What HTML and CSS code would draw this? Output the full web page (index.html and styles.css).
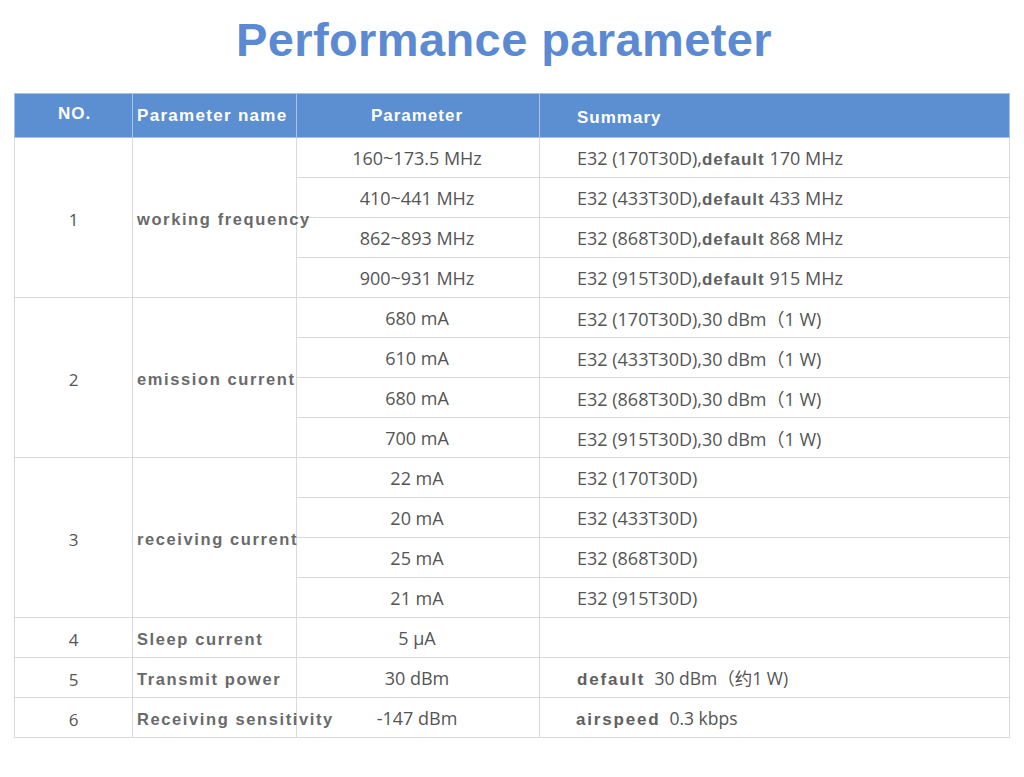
FILE: index.html
```html
<!DOCTYPE html>
<html>
<head>
<meta charset="utf-8">
<link rel="stylesheet" href="styles.css">
</head>
<body>
<div class="page">
  <div class="title-wrap"><h1 class="title">Performance parameter</h1></div>
  <table class="params">
    <colgroup>
      <col class="c-no"><col class="c-name"><col class="c-param"><col class="c-sum">
    </colgroup>
    <thead>
      <tr>
        <th class="h-no">NO.</th>
        <th class="h-name">Parameter name</th>
        <th class="h-param">Parameter</th>
        <th class="h-sum">Summary</th>
      </tr>
    </thead>
    <tbody>
      <tr><td class="no" rowspan="4">1</td><td class="name" rowspan="4">working frequency</td><td class="param">160~173.5 MHz</td><td class="sum">E32 (170T30D),<span class="em">default</span> 170 MHz</td></tr>
      <tr><td class="param">410~441 MHz</td><td class="sum">E32 (433T30D),<span class="em">default</span> 433 MHz</td></tr>
      <tr><td class="param">862~893 MHz</td><td class="sum">E32 (868T30D),<span class="em">default</span> 868 MHz</td></tr>
      <tr><td class="param">900~931 MHz</td><td class="sum">E32 (915T30D),<span class="em">default</span> 915 MHz</td></tr>

      <tr><td class="no" rowspan="4">2</td><td class="name" rowspan="4">emission current</td><td class="param">680 mA</td><td class="sum">E32 (170T30D),30 dBm（1 W)</td></tr>
      <tr><td class="param">610 mA</td><td class="sum">E32 (433T30D),30 dBm（1 W)</td></tr>
      <tr><td class="param">680 mA</td><td class="sum">E32 (868T30D),30 dBm（1 W)</td></tr>
      <tr><td class="param">700 mA</td><td class="sum">E32 (915T30D),30 dBm（1 W)</td></tr>

      <tr><td class="no" rowspan="4">3</td><td class="name" rowspan="4">receiving current</td><td class="param">22 mA</td><td class="sum">E32 (170T30D)</td></tr>
      <tr><td class="param">20 mA</td><td class="sum">E32 (433T30D)</td></tr>
      <tr><td class="param">25 mA</td><td class="sum">E32 (868T30D)</td></tr>
      <tr><td class="param">21 mA</td><td class="sum">E32 (915T30D)</td></tr>

      <tr><td class="no">4</td><td class="name">Sleep current</td><td class="param">5 μA</td><td class="sum"></td></tr>
      <tr><td class="no">5</td><td class="name">Transmit power</td><td class="param">30 dBm</td><td class="sum sum-small"><span class="em em-wide">default</span>&nbsp; 30 dBm（约1 W)</td></tr>
      <tr><td class="no">6</td><td class="name">Receiving sensitivity</td><td class="param">-147 dBm</td><td class="sum sum-small sum-tight"><span class="em em-wide">airspeed</span>&nbsp; 0.3 kbps</td></tr>
    </tbody>
  </table>
</div>
</body>
</html>
```

FILE: styles.css
```css
html, body {
  margin: 0;
  padding: 0;
  background: #ffffff;
}

.page {
  width: 1024px;
  height: 777px;
  padding: 0 16px 0 14px;
  box-sizing: border-box;
}

.title-wrap {
  height: 93px;
  display: flex;
  justify-content: center;
  padding-right: 14px;
}

.title {
  margin: 0;
  padding-top: 12px;
  font-family: "Liberation Sans", Arial, sans-serif;
  font-weight: bold;
  font-size: 47px;
  line-height: 56px;
  color: #5b8ad3;
  letter-spacing: 0.4px;
}

.params {
  width: 995px;
  border-collapse: collapse;
  table-layout: fixed;
  font-family: "Open Sans", "Noto Sans CJK SC", sans-serif;
  font-size: 18px;
  color: #555555;
}

.c-no { width: 118px; }
.c-name { width: 164px; }
.c-param { width: 243px; }
.c-sum { width: 470px; }

.params th,
.params td {
  border: 1px solid #dadada;
  padding: 0;
  white-space: nowrap;
  overflow: visible;
}

.params thead tr {
  height: 44px;
  background: #5b8fd2;
}

.params th {
  border-color: #a9c3e6;
  color: #ffffff;
  font-family: "Liberation Sans", Arial, sans-serif;
  font-weight: bold;
  font-size: 17px;
  letter-spacing: 1px;
}

.params .h-no { text-align: center; padding-bottom: 4px; padding-left: 2px; }
.params .h-name { text-align: left; padding-left: 4px; letter-spacing: 1.3px; }
.params .h-param { text-align: center; padding-right: 2px; }
.params .h-sum { text-align: left; padding-left: 37px; padding-top: 4px; }

.params tbody tr {
  height: 40px;
}

.params .no {
  text-align: center;
  vertical-align: middle;
  padding-top: 4px;
  font-size: 17px;
}

.params .name {
  text-align: left;
  padding-left: 4px;
  padding-top: 4px;
  font-family: "Liberation Sans", Arial, sans-serif;
  font-weight: bold;
  font-size: 16.5px;
  letter-spacing: 1.6px;
  color: #6a6a6a;
}

.params .param {
  text-align: center;
  padding-right: 2px;
}

.params .sum {
  text-align: left;
  padding-left: 37px;
}

.params .sum-small {
  font-size: 17.5px;
}

.params .sum-tight {
  padding-left: 36px;
}

.em {
  font-family: "Liberation Sans", Arial, sans-serif;
  font-weight: bold;
  font-size: 17px;
  letter-spacing: 1px;
  color: #606060;
}

.em-wide {
  letter-spacing: 1.8px;
}
```
